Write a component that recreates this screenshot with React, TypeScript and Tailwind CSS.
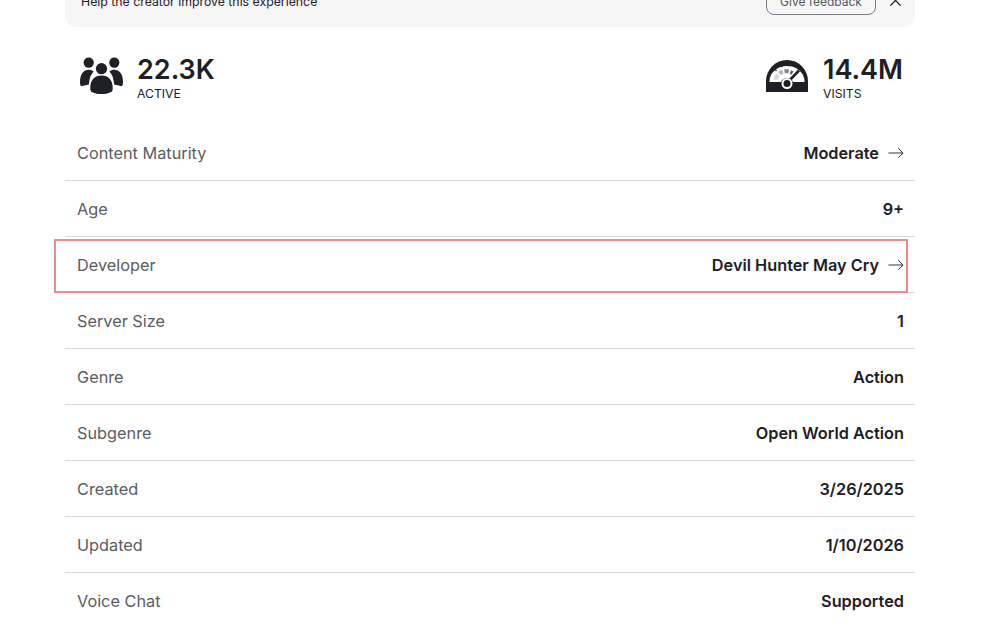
import { X } from "lucide-react";

const rows = [
  { label: "Content Maturity", value: "Moderate", arrow: true },
  { label: "Age", value: "9+" },
  { label: "Developer", value: "Devil Hunter May Cry", arrow: true, marked: true },
  { label: "Server Size", value: "1" },
  { label: "Genre", value: "Action" },
  { label: "Subgenre", value: "Open World Action" },
  { label: "Created", value: "3/26/2025" },
  { label: "Updated", value: "1/10/2026" },
  { label: "Voice Chat", value: "Supported" },
];

function PeopleIcon() {
  return (
    <svg viewBox="1 2 42 36.2" className="w-[43px] h-[38px]" fill="#1e2026">
      <circle cx="9.5" cy="7" r="5" />
      <circle cx="34.5" cy="7" r="5" />
      <circle cx="22" cy="13" r="5.5" />
      <path d="M1 26c0-7 3-12 8.500-12 2 0 3.500.6 4.800 1.700-2.800 2.700-4.300 7-4.600 12.800L2 30c-.7-.5-1-2-1-4z" />
      <path d="M43 26c0-7-3-12-8.500-12-2 0-3.500.6-4.800 1.700 2.800 2.700 4.300 7 4.600 12.800L42 30c.7-.5 1-2 1-4z" />
      <path d="M11 32c0-8 4-12.500 11-12.500S33 24 33 32c0 2-.6 3.400-2 4-5.500 2.400-12.500 2.400-18 0-1.400-.6-2-2-2-4z" />
    </svg>
  );
}

function GaugeIcon() {
  return (
    <svg viewBox="0 0 42 32" className="w-[42px] h-[32px]">
      <path d="M0 32V21a21 21 0 0 1 42 0v11z" fill="#1e2026" />
      <path d="M3.500 22v-1a17.500 15 0 0 1 35 0v1H27a6.500 6.500 0 0 0-12 0z" fill="#fff" />
      <path d="M7.500 19.500c.5-2.500 1.700-4.600 3.300-6.300l3 2.800c-1 1.100-1.800 2.500-2.200 4z" fill="#d8d8da" />
      <path d="M12 12c1.300-1 2.700-1.700 4.300-2.200l1.200 3.800c-.9.300-1.700.7-2.500 1.300z" fill="#b4b4b8" />
      <path d="M18 9.400c1.800-.3 3.500-.2 5.200.2l-1 3.800c-1.100-.3-2.200-.3-3.300-.1z" fill="#85858b" />
      <path d="M25 10.200l2.600 1.300-2.200 3.200-1.700-.9z" fill="#5c5c62" />
      <circle cx="10" cy="10.500" r="0.800" fill="#1e2026" />
      <circle cx="16" cy="6.500" r="0.800" fill="#1e2026" />
      <circle cx="23" cy="5.500" r="0.800" fill="#1e2026" />
      <path d="M22 22L33 10.500" stroke="#1e2026" strokeWidth="2.600" />
      <circle cx="21" cy="23.500" r="4.500" fill="#1e2026" stroke="#fff" strokeWidth="2" />
    </svg>
  );
}

function LongArrow() {
  return (
    <svg viewBox="0 0 16 12" className="w-[16px] h-[12px]" fill="none" stroke="#1e2026" strokeWidth="0.900">
      <path d="M0.500 6h14.500M10.300 1.300L15 6l-4.700 4.700" />
    </svg>
  );
}

function Stat({ value, label }: { value: string; label: string }) {
  return (
    <div className="flex flex-col">
      <span className="text-[27px] leading-[33px] font-semibold text-[#1e2026] mt-[2px]">{value}</span>
      <span className="text-[12.200px] leading-[16px] text-[#1e2026]">{label}</span>
    </div>
  );
}

export default function App() {
  return (
    <div className="h-[625px] overflow-hidden bg-white font-['Inter',sans-serif]">
      <div className="relative mx-[65px] w-[850px]">
        {/* Feedback banner, scrolled partly out of view */}
        <div className="-mt-[15px] h-[42px] pb-3 bg-[#f6f6f6] rounded-b-xl flex items-center justify-between pl-4 pr-[10px]">
          <span className="text-[12.300px] leading-[18px] pt-[3px] text-[#1e2026]">Help the creator improve this experience</span>
          <div className="flex items-center gap-[10px]">
            <div className="w-[110px] h-[30px] border border-[#7b7b80] rounded-lg flex items-center justify-center pt-[3px] text-[12px] text-[#55565b]">
              Give feedback
            </div>
            <X className="w-[19px] h-[19px] text-[#1e2026]" strokeWidth={1.5} />
          </div>
        </div>

        {/* Stats */}
        <div className="h-[98px] flex items-center justify-between pl-[15px] pr-[12px]">
          <div className="flex items-center gap-[14px]">
            <PeopleIcon />
            <Stat value="22.3K" label="ACTIVE" />
          </div>
          <div className="flex items-center gap-[15px]">
            <GaugeIcon />
            <Stat value="14.4M" label="VISITS" />
          </div>
        </div>

        {/* Details */}
        {rows.map((row) => (
          <div key={row.label} className="relative h-[56px] border-b border-[#d9dae0] flex items-center justify-between pl-3 pr-[11px] pt-[1px]">
            <span className="text-[16.300px] text-[#5b5c62]">{row.label}</span>
            <span className="flex items-center gap-[9px] text-[16.300px] font-semibold text-[#1e2026]">
              {row.value}
              {row.arrow && <LongArrow />}
            </span>
            {row.marked && (
              <div className="absolute left-[-11px] top-[2px] w-[854px] h-[54px] border-2 border-[#f08a8c]" />
            )}
          </div>
        ))}
      </div>
    </div>
  );
}
